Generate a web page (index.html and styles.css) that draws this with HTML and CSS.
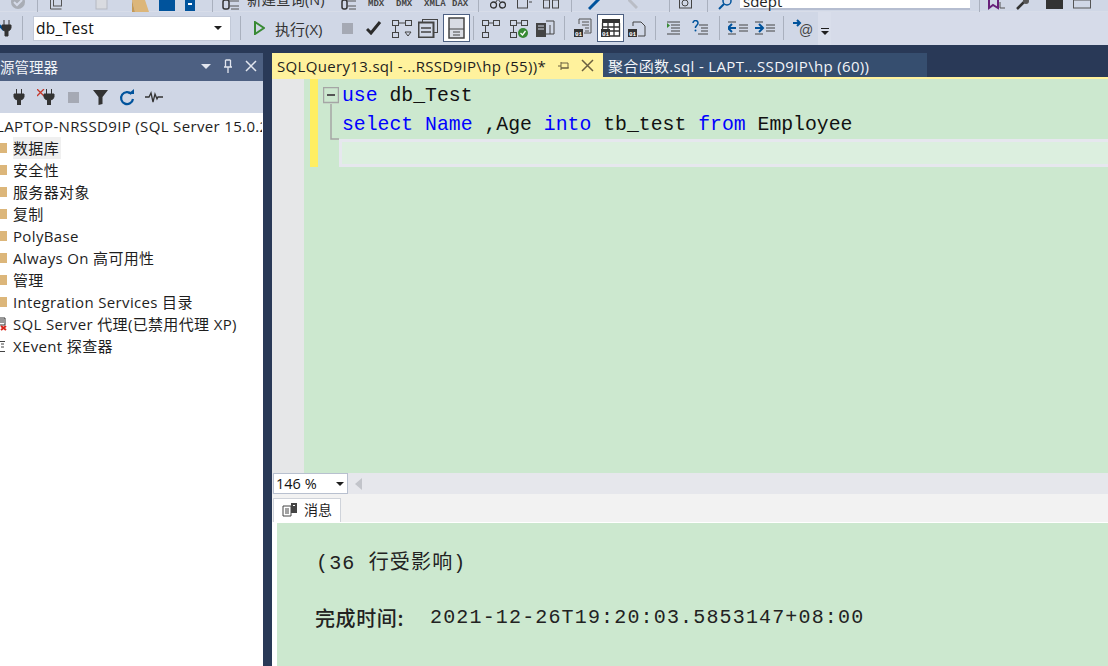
FILE: index.html
```html
<!DOCTYPE html>
<html lang="zh">
<head>
<meta charset="utf-8">
<title>SQL Server Management Studio</title>
<link rel="stylesheet" href="styles.css">
</head>
<body>
<header class="toolbars">
  <div class="row row-top">
    <svg class="m10" width="16" height="28" viewBox="0 -16 16 28"><circle cx="8" cy="2" r="7" fill="#a9adb5"/><path d="M4 2l3 3 5-5" stroke="#d5dae8" stroke-width="2" fill="none"/></svg>
    <i class="sep m11"></i>
    <svg class="m12" width="16" height="28" viewBox="0 -16 16 28"><path d="M.5 0v9h11" fill="none" stroke="#555"/><rect x="3.500" y="-2" width="8" height="8" fill="none" stroke="#555"/></svg>
    <svg class="m29" width="13" height="28" viewBox="0 -16 13 28"><rect x="1" y="-2" width="11" height="11" fill="#d9dbe0" stroke="#b5b9c2"/></svg>
    <svg class="m24" width="17" height="28" viewBox="0 -16 17 28"><path d="M0 0h13l4 12H3z" fill="#dcb67a"/><path d="M0 0v12h3z" fill="#c49a58"/></svg>
    <svg class="m10" width="16" height="28" viewBox="0 -16 16 28"><path d="M0 0h16v11H0z" fill="#00539c"/></svg>
    <svg class="m10" width="10" height="28" viewBox="0 -16 10 28"><path d="M0 0h10v11H0z" fill="#00539c"/><rect x="3" y="3" width="4" height="2" fill="#fff"/></svg>
    <i class="sep m17"></i>
    <svg class="m9" width="18" height="28" viewBox="0 -16 18 28"><rect x="1" y="0" width="6" height="9" rx="2" fill="none" stroke="#333" stroke-width="1.500"/><path d="M7 1h10M7 6h10M9 9h8" stroke="#555"/></svg>
    <span class="top-label m7">新建查询(N)</span>
    <svg class="m13" width="15" height="28" viewBox="0 -16 15 28"><rect x="1" y="0" width="5" height="9" rx="2" fill="none" stroke="#333" stroke-width="1.500"/><path d="M6 1h9M6 6h9M8 9h7" stroke="#555"/></svg>
    <span class="q-label m12">MDX</span>
    <span class="q-label m8">DMX</span>
    <span class="q-label m8">XMLA</span>
    <span class="q-label m8">DAX</span>
    <i class="sep m6"></i>
    <svg class="m11" width="16" height="28" viewBox="0 -16 16 28"><circle cx="3.500" cy="5" r="3" fill="none" stroke="#333" stroke-width="1.300"/><circle cx="12.500" cy="5" r="3" fill="none" stroke="#333" stroke-width="1.300"/><path d="M5 3L9 -2M11 3L7 -2" stroke="#333"/></svg>
    <svg class="m11" width="16" height="28" viewBox="0 -16 16 28"><rect x=".5" y="-2" width="10" height="10" fill="none" stroke="#444"/><path d="M12 2h3" stroke="#444"/></svg>
    <svg class="m10" width="16" height="28" viewBox="0 -16 16 28"><rect x=".5" y="0" width="6" height="8" fill="none" stroke="#444"/><rect x="9.500" y="0" width="6" height="8" fill="none" stroke="#444"/></svg>
    <i class="sep m12"></i>
    <svg class="m16" width="13" height="28" viewBox="0 -16 13 28"><path d="M1 9L11 -1" stroke="#00539c" stroke-width="3"/></svg>
    <svg class="m27" width="10" height="28" viewBox="0 -16 10 28"><path d="M0 -1l9 9" stroke="#b9bdc6" stroke-width="3"/></svg>
    <i class="sep m31"></i>
    <svg class="m9" width="17" height="28" viewBox="0 -16 17 28"><rect x=".5" y="-1" width="12" height="9" fill="none" stroke="#444"/><circle cx="6" cy="3" r="3" fill="none" stroke="#444"/></svg>
    <i class="sep m11"></i>
    <svg class="m10" width="15" height="28" viewBox="0 -16 15 28"><circle cx="9" cy="1" r="4" fill="none" stroke="#00539c" stroke-width="1.500"/><path d="M6 4l-5 5" stroke="#00539c" stroke-width="2"/></svg>
    <div class="search-box m7">sdept</div>
    <i class="sep m9"></i>
    <svg class="m8" width="18" height="28" viewBox="0 -16 18 28"><path d="M1 0v8l4-3 5 3V0" fill="none" stroke="#68217a" stroke-width="2"/><path d="M12 2v6h5" fill="none" stroke="#555"/></svg>
    <svg class="m10" width="16" height="28" viewBox="0 -16 16 28"><path d="M1 9l7-7" stroke="#333" stroke-width="2.500"/><circle cx="10" cy="1" r="3" fill="#555"/></svg>
    <svg class="m14" width="17" height="28" viewBox="0 -16 17 28"><path d="M0 0h17v9H0z" fill="#333"/></svg>
    <svg class="m10" width="18" height="28" viewBox="0 -16 18 28"><rect x=".5" y="0" width="17" height="8" fill="none" stroke="#555"/></svg>
  </div>
  <div class="row row-main">
    <div class="row-main-tools">
      <svg width="12" height="18" viewBox="0 0 12 18"><path d="M-3 4l7 7" stroke="#00539c" stroke-width="2.500"/><path d="M4 1v5M9 1v5M2 6h9v3a4 4 0 0 1-3 3v5H5v-5a4 4 0 0 1-3-3z" fill="#333" stroke="#333"/></svg>
      <i class="sep m10"></i>
      <div class="combo m10"><span>db_Test</span><b class="caret"></b></div>
      <i class="sep m9"></i>
      <svg class="m13" width="11" height="14" viewBox="0 0 11 14"><path d="M1 1l9 6-9 6z" fill="none" stroke="#388a34" stroke-width="2"/></svg>
      <span class="run m10">执行(X)</span>
      <svg class="m17" width="11" height="11" viewBox="0 0 11 11"><rect width="11" height="11" fill="#a5a9b4"/></svg>
      <svg class="m13" width="16" height="14" viewBox="0 0 16 14"><path d="M1 8l4 4 9-11" fill="none" stroke="#2b2b2b" stroke-width="3"/></svg>
      <svg class="m10" width="20" height="20" viewBox="0 0 20 20"><g fill="none" stroke="#444"><rect x=".500" y="2.500" width="6" height="5"/><rect x="13.500" y="2.500" width="6" height="5"/><rect x=".500" y="14.500" width="6" height="5"/><path d="M3.500 8v6M7 5h6M13 14h6l-3 4z"/></g></svg>
      <svg class="m6" width="20" height="20" viewBox="0 0 20 20"><g fill="none" stroke="#444"><rect x="4.500" y="1.500" width="15" height="13"/><rect x=".500" y="4.500" width="15" height="15" fill="#d0d7e6" stroke-width="2"/><path d="M3 10h10M3 14h10" stroke-width="1.500"/></g></svg>
      <div class="tool-on tall m5"><svg width="17" height="22" viewBox="0 0 17 22"><rect x="1" y="1" width="15" height="20" fill="#d9dce4" stroke="#444" stroke-width="1.500"/><path d="M1 12h15" stroke="#444"/><path d="M5 15h7M5 18h7" stroke="#444"/></svg></div>
      <i class="sep m3"></i>
      <svg class="m8" width="18" height="20" viewBox="0 0 18 20"><g fill="none" stroke="#444"><rect x=".500" y="2.500" width="6" height="5"/><rect x="11.500" y="2.500" width="6" height="5"/><rect x=".500" y="14.500" width="6" height="5"/><path d="M3.500 8v6M7 5h4"/></g></svg>
      <svg class="m10" width="18" height="20" viewBox="0 0 18 20"><g fill="none" stroke="#444"><rect x=".500" y="2.500" width="6" height="5"/><rect x="11.500" y="2.500" width="6" height="5"/><rect x=".500" y="14.500" width="6" height="5"/><path d="M3.500 8v6M7 5h4"/></g><circle cx="13" cy="15" r="5" fill="#388a34"/><path d="M10.500 15l2 2 3-4" stroke="#fff" stroke-width="1.300" fill="none"/></svg>
      <svg class="m7" width="20" height="20" viewBox="0 0 20 20"><rect x="1" y="5" width="10" height="14" fill="#444"/><path d="M3 8h6M3 11h6" stroke="#d0d7e6"/><path d="M11 3h8v13h-8M15 7v9" fill="none" stroke="#444"/></svg>
      <i class="sep m9"></i>
      <svg class="m9" width="18" height="20" viewBox="0 0 18 20"><path d="M5 6V1h12v14h-7M8 4h7M8 7h7M11 10h4M11 13h4" fill="none" stroke="#555"/><rect x="0" y="11" width="9" height="8" fill="#333"/><text x="1" y="18" class="mini">01</text></svg>
      <div class="tool-on wide m5"><svg width="20" height="20" viewBox="0 0 20 20"><path d="M1 1h18v4H1z" fill="#333"/><path d="M1.500 5v13h17V5M7 5v13M13 5v13M1 9h18M1 13h18" fill="none" stroke="#333" stroke-width="1.300"/><rect x="0" y="11" width="9" height="8" fill="#333"/><text x="1" y="18" class="mini">01</text></svg></div>
      <svg class="m4" width="18" height="20" viewBox="0 0 18 20"><path d="M5 8V4h8l4 4v10h-7" fill="none" stroke="#444"/><rect x="0" y="11" width="9" height="8" fill="#333"/><text x="1" y="18" class="mini">01</text></svg>
      <i class="sep m9"></i>
      <svg class="m11" width="13" height="14" viewBox="0 0 13 14"><path d="M0 1h13M4 4h9M4 7h9M4 10h9M0 13h13" stroke="#444"/><path d="M0 2l3 2.500L0 7z" fill="#388a34"/></svg>
      <svg class="m12" width="16" height="16" viewBox="0 0 16 16"><path d="M1 3a2.500 2.500 0 1 1 4 2L3.500 7v1" fill="none" stroke="#00539c" stroke-width="1.500"/><circle cx="3.500" cy="10.500" r="1" fill="#00539c"/><path d="M7 5h9M9 8h7M9 11h7M6 14h10" stroke="#444"/></svg>
      <i class="sep m11"></i>
      <svg class="m8" width="20" height="14" viewBox="0 0 20 14"><path d="M0 1h8M0 13h8" stroke="#444"/><path d="M8 7H1M4 3L0 7l4 4" fill="none" stroke="#00539c" stroke-width="2"/><path d="M11 4h9M11 7h9M11 10h9" stroke="#444"/></svg>
      <svg class="m7" width="20" height="14" viewBox="0 0 20 14"><path d="M0 1h8M0 13h8" stroke="#444"/><path d="M0 7h7M4 3l4 4-4 4" fill="none" stroke="#00539c" stroke-width="2"/><path d="M11 4h9M11 7h9M11 10h9" stroke="#444"/></svg>
      <i class="sep m8"></i>
      <svg class="m9" width="20" height="18" viewBox="0 0 20 18"><path d="M0 4h7M4 1l3 3-3 3" fill="none" stroke="#00539c" stroke-width="2"/><text x="6" y="16" class="at">@</text></svg>
    </div>
    <div class="overflow"><i class="of-line"></i><b class="caret"></b></div>
  </div>
</header>

<div class="workspace">
  <aside class="explorer">
    <div class="panel-title">
      <span class="title-text">源管理器</span>
      <b class="title-caret"></b>
      <svg class="m12" width="10" height="14" viewBox="0 0 10 14"><path d="M2.500 1v7M7.500 1v7M1 8h8M5 8v6M2.500 1h5" stroke="#e2e6ef" stroke-width="1.300" fill="none"/></svg>
      <svg class="m12" width="12" height="12" viewBox="0 0 12 12"><path d="M1 1l10 10M11 1L1 11" stroke="#e2e6ef" stroke-width="1.500"/></svg>
    </div>
    <div class="panel-tools">
      <svg class="m13" width="12" height="16" viewBox="0 0 12 16"><path d="M3.500 0v5M8.500 0v5M1 5h10v3a4 4 0 0 1-3.500 3v5h-3v-5A4 4 0 0 1 1 8z" fill="#333" stroke="#333"/></svg>
      <svg class="m12" width="18" height="16" viewBox="0 0 18 16"><path d="M0 0l7 7M7 0L0 7" stroke="#c4372a" stroke-width="1.300"/><path d="M9.500 0v5M14.500 0v5M7 5h10v3a4 4 0 0 1-3.500 3v5h-3v-5A4 4 0 0 1 7 8z" fill="#333" stroke="#333"/></svg>
      <svg class="m13" width="11" height="11" viewBox="0 0 11 11"><rect width="11" height="11" fill="#a5a9b4"/></svg>
      <svg class="m14" width="15" height="16" viewBox="0 0 15 16"><path d="M0 1h15L9.500 8v7l-4 1V8z" fill="#333"/></svg>
      <svg class="m11" width="16" height="17" viewBox="0 0 16 17"><path d="M12.500 5A6 6 0 1 0 14 10" fill="none" stroke="#00539c" stroke-width="2.200"/><path d="M9 5h6V0z" fill="#00539c"/></svg>
      <svg class="m10" width="18" height="12" viewBox="0 0 18 12"><path d="M0 6h4l2-4 2 9 2-8 2 5 1-2h5" fill="none" stroke="#333" stroke-width="1.300"/></svg>
    </div>
    <ul class="tree">
      <li class="node server"><span>LAPTOP-NRSSD9IP (SQL Server 15.0.2</span></li>
      <li class="node"><i class="folder"></i><span class="picked">数据库</span></li>
      <li class="node"><i class="folder"></i><span>安全性</span></li>
      <li class="node"><i class="folder"></i><span>服务器对象</span></li>
      <li class="node"><i class="folder"></i><span>复制</span></li>
      <li class="node"><i class="folder"></i><span>PolyBase</span></li>
      <li class="node"><i class="folder"></i><span>Always On 高可用性</span></li>
      <li class="node"><i class="folder"></i><span>管理</span></li>
      <li class="node"><i class="folder"></i><span>Integration Services 目录</span></li>
      <li class="node"><svg class="tree-icon" width="9" height="14" viewBox="0 0 9 14"><path d="M0 1h6v7H0zM1 3h4M1 5h4" fill="none" stroke="#333"/><path d="M2 9l5 4M7 9l-5 4" stroke="#d8261c" stroke-width="2"/></svg><span>SQL Server 代理(已禁用代理 XP)</span></li>
      <li class="node"><svg class="tree-icon" width="9" height="14" viewBox="0 0 9 14"><path d="M6 2.500H.5v10H6M2 5h3M2 8h3" fill="none" stroke="#444"/></svg><span>XEvent 探查器</span></li>
    </ul>
  </aside>

  <main class="doc">
    <nav class="tabs">
      <div class="tab active"><span class="tab-name">SQLQuery13.sql -...RSSD9IP\hp (55))*</span>
        <svg class="tab-pin" width="12" height="10" viewBox="0 0 12 10"><path d="M0 5h3M3 1v8M3 2h7v5H3M3 7h8" stroke="#6b6040" fill="none"/></svg>
        <svg class="tab-x" width="13" height="13" viewBox="0 0 13 13"><path d="M1 1l11 11M12 1L1 12" stroke="#6b6040" stroke-width="1.500"/></svg>
      </div>
      <div class="tab idle">聚合函数.sql - LAPT...SSD9IP\hp (60))</div>
    </nav>
    <section class="editor">
      <div class="margin"></div>
      <div class="change-wrap"><div class="changes"></div></div>
      <div class="fold">
        <svg width="16" height="54" viewBox="0 0 16 54"><rect x=".5" y=".5" width="15" height="15" fill="none" stroke="#a5a5a5" stroke-width="1.500"/><path d="M4 8h8" stroke="#555" stroke-width="2"/><path d="M8 17v35h8" fill="none" stroke="#a5a5a5" stroke-width="1.500"/></svg>
      </div>
      <div class="code">
        <div class="line"><span class="kw">use</span> db_Test</div>
        <div class="line"><span class="kw">select</span> <span class="kw">Name</span> ,Age <span class="kw">into</span> tb_test <span class="kw">from</span> Employee</div>
        <div class="line current"></div>
      </div>
    </section>
    <div class="zoom-bar">
      <div class="zoom-box"><span>146 %</span><b class="caret"></b></div>
      <b class="scroll-left"></b>
    </div>
    <div class="result-tabs">
      <div class="result-tab">
        <svg width="16" height="15" viewBox="0 0 16 15"><path d="M1 4h8v10H1z" fill="#fff" stroke="#444"/><path d="M3 7h4M3 9h4M3 11h4" stroke="#444"/><path d="M9 1h6v10H9z" fill="#444"/><rect x="11" y="3" width="2" height="1" fill="#fff"/></svg>
        <span>消息</span>
      </div>
    </div>
    <section class="messages">
      <p class="msg msg-a">(36 行受影响)</p>
      <p class="msg msg-b"><span class="label">完成时间:</span>2021-12-26T19:20:03.5853147+08:00</p>
    </section>
  </main>
</div>
</body>
</html>
```

FILE: styles.css
```css
* { box-sizing: border-box; }
html, body { margin: 0; height: 100%; }
body {
  width: 1108px;
  height: 666px;
  overflow: hidden;
  display: flex;
  flex-direction: column;
  background: #293957;
  font-family: "Open Sans", "Noto Sans CJK SC", sans-serif;
  color: #1e1e1e;
}
svg { display: block; flex: none; }
i, b { display: block; flex: none; }

.m3 { margin-left: 3px; } .m4 { margin-left: 4px; } .m5 { margin-left: 5px; } .m6 { margin-left: 6px; }
.m7 { margin-left: 7px; } .m8 { margin-left: 8px; } .m9 { margin-left: 9px; } .m10 { margin-left: 10px; }
.m11 { margin-left: 11px; } .m12 { margin-left: 12px; } .m13 { margin-left: 13px; } .m14 { margin-left: 14px; }
.m16 { margin-left: 16px; } .m17 { margin-left: 17px; } .m24 { margin-left: 24px; } .m27 { margin-left: 27px; }
.m29 { margin-left: 29px; } .m31 { margin-left: 31px; }

.toolbars { height: 45px; flex: none; overflow: hidden; background: #d6dbe9; }
.row { display: flex; align-items: center; }
.row-top { height: 28px; margin-top: -16px; background: #d0d7e6; border-bottom: 1px solid #d8dde9; }
.row-main { height: 33px; }
.row-main-tools { display: flex; align-items: center; width: 818px; height: 33px; padding-bottom: 1px; background: #d0d7e6; }
.sep { width: 1px; height: 24px; background: #a9b0be; }
.row-top .sep { height: 28px; }

.top-label { font-size: 14.500px; color: #333; width: 81px; white-space: nowrap; margin-top: 2px; }
.q-label { font: bold 9px "Liberation Mono", monospace; color: #444; margin-top: 12px; width: 20px; white-space: nowrap; }
.search-box { width: 230px; height: 26px; align-self: flex-start; padding: 9px 0 0 3px; background: #fff; border-bottom: 2px solid #b5bdd0; font-size: 15px; line-height: 17px; }

.combo { width: 198px; height: 25px; padding: 0 8px 0 2px; display: flex; align-items: center; justify-content: space-between; background: #fff; border: 1px solid #c2c9d8; font-size: 15.500px; letter-spacing: .3px; color: #111; }
.caret { width: 0; height: 0; border-left: 4px solid transparent; border-right: 4px solid transparent; border-top: 4px solid #1e1e1e; }
.run { width: 50px; font-size: 15px; color: #333; white-space: nowrap; }
.tool-on { height: 28px; display: flex; align-items: center; justify-content: center; background: #fff; border: 1px solid #4d6082; }
.tool-on.tall { width: 27px; }
.tool-on.wide { width: 27px; }
.mini { font: bold 6px "Liberation Mono", monospace; fill: #fff; }
.at { font: 14px "Liberation Sans", sans-serif; fill: #444; }
.overflow { width: 13px; height: 33px; padding-top: 16px; display: flex; flex-direction: column; align-items: center; gap: 2px; background: #d9deeb; }
.of-line { width: 8px; height: 1px; background: #1e1e1e; }

.workspace { flex: 1; min-height: 0; padding-top: 8px; display: flex; gap: 9px; }

.explorer { width: 263px; flex: none; display: flex; flex-direction: column; overflow: hidden; background: #fff; }
.panel-title { height: 28px; flex: none; padding-bottom: 2px; display: flex; align-items: center; background: #4d6082; color: #f2f4f8; font-size: 14.500px; }
.title-text { width: 201px; white-space: nowrap; }
.title-caret { width: 0; height: 0; border-left: 5px solid transparent; border-right: 5px solid transparent; border-top: 5px solid #e2e6ef; }
.panel-tools { height: 32px; flex: none; display: flex; align-items: center; background: #cfd6e5; }

.tree { list-style: none; margin: 0; padding: 2px 0 0; font-size: 15px; letter-spacing: .35px; color: #1e1e1e; }
.node { height: 22px; display: flex; align-items: center; white-space: nowrap; overflow: hidden; padding-left: 13px; position: relative; }
.node.server { padding-left: 0; margin-left: -4px; width: 266px; }
.node span { padding: 0 2px 0 0; line-height: 22px; }
.picked { background: #f0f0f0; }
.folder { position: absolute; left: 0; top: 6px; width: 7px; height: 10px; background: #dcb67a; }
.tree-icon { position: absolute; left: -1px; top: 4px; }

.doc { flex: 1; min-width: 0; display: flex; flex-direction: column; background: #fff; }
.tabs { height: 26px; flex: none; display: flex; background: #293957; border-bottom: 2px solid #fff29d; }
.tab { height: 24px; padding-top: 1px; display: flex; align-items: center; font-size: 15px; letter-spacing: .33px; white-space: nowrap; }
.tab.active { width: 331px; padding-left: 5px; background: #fff29d; color: #1e1e1e; }
.tab-name { width: 281px; }
.tab-pin { margin-left: 0; }
.tab-x { margin-left: 11px; }
.tab.idle { width: 324px; padding-left: 5px; background: #364e6f; color: #f2f4f8; }

.editor { flex: none; height: 394px; display: flex; background: #cce8cf; }
.margin { width: 32px; background: #e6e7e8; }
.change-wrap { width: 14px; padding-left: 6px; }
.changes { width: 8px; height: 88px; background: #ffee62; }
.fold { width: 21px; padding: 8px 0 0 5px; }
.code { flex: 1; min-width: 0; padding-top: 3px; font: 19.800px/29px "Liberation Mono", monospace; color: #111; }
.line { height: 29px; padding-left: 3px; white-space: pre; }
.kw { color: #0000ff; }
.line.current { margin-top: -1px; height: 28px; background: #dcefdf; border: 3px solid #e6e7ee; border-right: 0; }

.zoom-bar { height: 21px; flex: none; display: flex; align-items: center; background: #e6e7ec; }
.zoom-box { width: 75px; height: 21px; margin-left: 1px; padding: 0 3px 0 2px; display: flex; align-items: center; justify-content: space-between; background: #fff; border: 1px solid #b8c0cf; font-size: 14.500px; color: #111; }
.scroll-left { width: 0; height: 0; margin-left: 7px; border-top: 6px solid transparent; border-bottom: 6px solid transparent; border-right: 7px solid #c2c4ca; }

.result-tabs { height: 29px; flex: none; padding: 4px 0 0 1px; display: flex; background: #f2f2f2; border-bottom: 1px solid #fff; }
.result-tab { width: 68px; height: 24px; padding: 0 0 3px 8px; display: flex; align-items: center; gap: 6px; background: #fff; border: 1px solid #cfd3da; border-bottom: 0; font-size: 14px; }

.messages { flex: 1; margin-left: 5px; padding: 27px 0 0 38px; background: #cce8cf; font: 20px/28px "Liberation Mono", "Noto Sans CJK SC", monospace; letter-spacing: 1.160px; color: #222; }
.msg { margin: 0; white-space: pre; }
.msg-a { margin-left: 1px; }
.msg-b { margin-top: 26px; display: flex; }
.label { width: 115px; font-family: "Noto Sans CJK SC", sans-serif; font-weight: 500; letter-spacing: .6px; }
```
